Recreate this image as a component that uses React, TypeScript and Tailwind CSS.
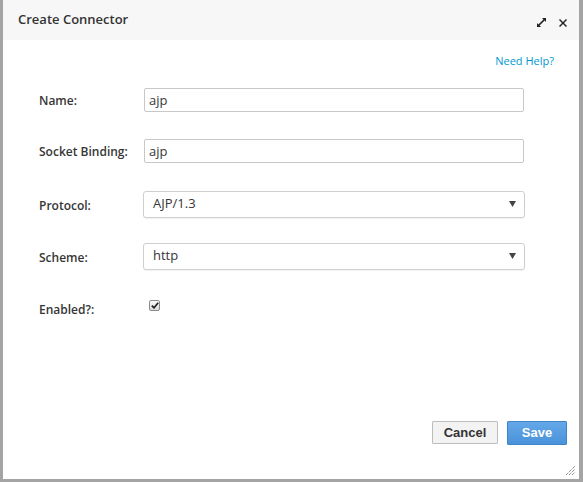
const labelCls = 'w-[105px] shrink-0 pt-[3px] text-[12px] font-semibold text-[#363636]';
const inputCls =
  'h-[24px] w-[380px] rounded-[2px] border border-[#c8c8c8] bg-white px-[4px] text-[13px] text-[#363636] outline-none';

function ExpandIcon() {
  return (
    <svg width="9" height="9" viewBox="0 0 9 9" className="text-[#222]">
      <path d="M5 0h4v4L7.6 2.6 2.6 7.6 4 9H0V5l1.4 1.4 5-5z" fill="currentColor" />
    </svg>
  );
}

function CloseIcon() {
  return (
    <svg width="8" height="8" viewBox="0 0 8 8" className="text-[#222]">
      <path d="M1 0l3 3 3-3 1 1-3 3 3 3-1 1-3-3-3 3-1-1 3-3-3-3z" fill="currentColor" />
    </svg>
  );
}

function Select({ value }: { value: string }) {
  return (
    <div className="flex h-[27px] w-[382px] items-center justify-between rounded-[3px] border border-[#cfcfcf] bg-white pl-[9px] pr-[8px] text-[13px] text-[#363636] shadow-[0_1px_1px_rgba(0,0,0,0.05)]">
      <span>{value}</span>
      <svg width="7" height="6" viewBox="0 0 7 6">
        <path d="M0 0h7L3.5 6z" fill="#444" />
      </svg>
    </div>
  );
}

function Checkbox() {
  return (
    <span className="ml-[5px] flex h-[11px] w-[11px] items-center justify-center rounded-[2px] border border-[#8a8a8a] bg-gradient-to-b from-[#fafafa] to-[#dcdcdc]">
      <svg width="8" height="7" viewBox="0 0 8 7">
        <path d="M0.8 3.6L3 5.8 7.2 0.8" stroke="#222" strokeWidth="1.7" fill="none" />
      </svg>
    </span>
  );
}

export default function App() {
  return (
    <div
      className="flex h-[482px] w-[583px] bg-[#a4a4a4] pb-[3px] pl-[3px] pr-[4px]"
      style={{ fontFamily: '"Open Sans", "Liberation Sans", sans-serif' }}
    >
      <div className="relative flex flex-1 flex-col bg-white">
        {/* header */}
        <div className="flex h-[40px] items-center justify-between bg-[#f7f7f7] pl-[15px] pr-[12px]">
          <h1 className="text-[13px] font-semibold text-[#333]">Create Connector</h1>
          <div className="mt-[5px] flex items-center gap-[13px]">
            <ExpandIcon />
            <CloseIcon />
          </div>
        </div>

        {/* body */}
        <div className="flex flex-1 flex-col pl-[36px]">
          <div className="mt-[13px] flex justify-end pr-[25px]">
            <a className="text-[11px] text-[#0099d3]">Need Help?</a>
          </div>

          <div className="mt-[18px] flex items-center">
            <label className={labelCls}>Name:</label>
            <input className={inputCls} defaultValue="ajp" />
          </div>

          <div className="mt-[27px] flex items-center">
            <label className={labelCls}>Socket Binding:</label>
            <input className={inputCls} defaultValue="ajp" />
          </div>

          <div className="mt-[28px] flex items-center">
            <label className={labelCls + ' mr-[-1px]'}>Protocol:</label>
            <Select value="AJP/1.3" />
          </div>

          <div className="mt-[25px] flex items-center">
            <label className={labelCls + ' mr-[-1px]'}>Scheme:</label>
            <Select value="http" />
          </div>

          <div className="mt-[23px] flex items-center">
            <label className={labelCls + ' pt-[8px]'}>Enabled?:</label>
            <Checkbox />
          </div>

          <div className="mt-auto mb-[34px] flex justify-end gap-[9px] pr-[12px]">
            <button
              className="h-[23px] w-[66px] rounded-[1px] border border-[#bdbdbd] bg-[#f3f3f3] text-[13px] font-bold text-[#333]"
              style={{ fontFamily: '"Liberation Sans", Arial, sans-serif' }}
            >
              Cancel
            </button>
            <button
              className="h-[24px] w-[60px] rounded-[1px] border border-[#3f85c9] bg-gradient-to-b from-[#64a8e8] to-[#4a92d9] text-[13px] font-bold text-white"
              style={{ fontFamily: '"Liberation Sans", Arial, sans-serif' }}
            >
              Save
            </button>
          </div>
        </div>

        {/* resize grip */}
        <svg className="absolute bottom-[3px] right-[3px]" width="11" height="11" viewBox="0 0 11 11">
          <path d="M1 10L10 1M4 10L10 4M7 10L10 7" stroke="#555" strokeWidth="1" strokeDasharray="1 1" />
        </svg>
      </div>
    </div>
  );
}
